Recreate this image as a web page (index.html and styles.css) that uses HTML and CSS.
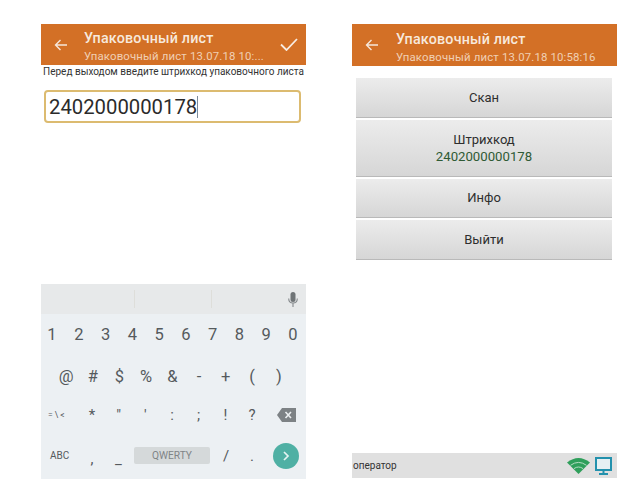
FILE: index.html
```html
<!DOCTYPE html>
<html lang="en">
<head>
  <meta charset="UTF-8" />
  <meta name="viewport" content="width=device-width, initial-scale=1.0" />
  <title>Упаковочный лист</title>
  <link rel="stylesheet" href="styles.css">
</head>
<body>

  <!-- Left screen: barcode entry -->
  <div class="phone">
    <header class="appbar">
      <svg class="back" width="13" height="12" viewBox="0 0 13 12"><path d="M13 6H1.500M6.500 1L1.500 6l5 5" fill="none" stroke="#f6e6da" stroke-width="1.400"/></svg>
      <div class="titles">
        <div class="title">Упаковочный лист</div>
        <div class="subtitle">Упаковочный лист 13.07.18 10:...</div>
      </div>
      <svg class="check" width="18" height="13" viewBox="0 0 18 13"><path d="M1 6.500l5.500 5.500L17 1" fill="none" stroke="#f8ece2" stroke-width="1.800"/></svg>
    </header>
    <p class="hint">Перед выходом введите штрихкод упаковочного листа</p>
    <div class="field"><span>2402000000178</span><i class="caret"></i></div>

    <div class="keyboard">
      <div class="suggest">
        <span class="sep"></span>
        <span class="sep"></span>
        <svg class="mic" width="10" height="15" viewBox="0 0 10 15">
          <rect x="2.500" y="0" width="5" height="10" rx="2.500" fill="#6f7477"/>
          <path d="M.7 6.500c0 3 1.800 4.500 4.300 4.500s4.300-1.500 4.300-4.500M5 11v4" fill="none" stroke="#85898c" stroke-width="1.100"/>
        </svg>
      </div>
      <div class="keys row-num">
        <span>1</span><span>2</span><span>3</span><span>4</span><span>5</span><span>6</span><span>7</span><span>8</span><span>9</span><span>0</span>
      </div>
      <div class="keys row-sym">
        <span>@</span><span>#</span><span>$</span><span>%</span><span>&amp;</span><span>-</span><span>+</span><span>(</span><span>)</span>
      </div>
      <div class="keys row-third">
        <span class="small">= \ &lt;</span><span>*</span><span>"</span><span>'</span><span>:</span><span>;</span><span>!</span><span>?</span>
        <svg class="del" width="19" height="14" viewBox="0 0 19 14">
          <path d="M5 0h14v14H5L0 7z" fill="#7d8285"/>
          <path d="M8.500 4l5.500 6M14 4l-5.500 6" stroke="#eceff1" stroke-width="1.600"/>
        </svg>
      </div>
      <div class="keys row-bottom">
        <span class="abc">ABC</span><span class="comma">,</span><span class="under">_</span>
        <span class="space">QWERTY</span>
        <span class="slash">/</span><span class="dot">.</span>
        <span class="go"><svg width="8" height="10" viewBox="0 0 8 10"><path d="M2 1l4 4-4 4" fill="none" stroke="#e6f4f2" stroke-width="1.700"/></svg></span>
      </div>
    </div>
  </div>

  <!-- Right screen: document menu -->
  <div class="phone">
    <header class="appbar appbar-tall">
      <svg class="back" width="13" height="12" viewBox="0 0 13 12"><path d="M13 6H1.500M6.500 1L1.500 6l5 5" fill="none" stroke="#f6e6da" stroke-width="1.400"/></svg>
      <div class="titles">
        <div class="title">Упаковочный лист</div>
        <div class="subtitle">Упаковочный лист 13.07.18 10:58:16</div>
      </div>
    </header>
    <div class="menu">
      <div class="btn">Скан</div>
      <div class="btn btn-tall">Штрихкод<span class="code">2402000000178</span></div>
      <div class="btn">Инфо</div>
      <div class="btn">Выйти</div>
    </div>
    <footer class="status">
      <span>оператор</span>
      <svg class="wifi" width="23" height="17" viewBox="0 0 23 17">
        <path d="M0 5.500Q11.500 -3.500 23 5.500L11.500 17z" fill="#2f9f5b"/>
        <path d="M3.500 8.300Q11.500 2.500 19.500 8.300M7 11.600Q11.500 8.400 16 11.600" fill="none" stroke="#b5dcc3" stroke-width="1"/>
      </svg>
      <svg class="monitor" width="17" height="18" viewBox="0 0 17 18">
        <rect x="1" y="1" width="15" height="12" fill="#e6f0f3" stroke="#2391ad" stroke-width="2"/>
        <path d="M8.500 13v3M4 17h9" stroke="#2391ad" stroke-width="2"/>
      </svg>
    </footer>
  </div>

</body>
</html>
```

FILE: styles.css
```css
body {
  margin: 0;
  padding: 24px 0 0 41px;
  display: flex;
  gap: 46px;
  font-family: Roboto, "Liberation Sans", sans-serif;
  background-color: #ffffff;
  color: #333;
}

.phone {
  width: 265px;
  height: 455px;
  display: flex;
  flex-direction: column;
}

/* Orange title bar */
.appbar {
  height: 41px;
  flex-shrink: 0;
  display: flex;
  align-items: center;
  background-color: #d37026;
  color: #f7e9dd;
}

.appbar-tall {
  height: 42px;
}

.back {
  margin-left: 13px;
  flex-shrink: 0;
}

.titles {
  margin-left: 17px;
  flex: 1;
  align-self: flex-start;
  padding-top: 6px;
  white-space: nowrap;
}

.appbar-tall .titles {
  margin-left: 18px;
  padding-top: 7px;
}

.title {
  font-size: 14.300px;
  font-weight: 500;
  line-height: 16px;
  letter-spacing: 0.2px;
}

.subtitle {
  font-size: 11.400px;
  line-height: 20px;
  color: #f0cfb4;
  letter-spacing: 0.15px;
}

.check {
  margin-right: 8px;
}

.hint {
  margin: 1px 0 0;
  font-size: 10px;
  line-height: 12px;
  text-align: center;
  white-space: nowrap;
  color: #333;
}

.field {
  margin: 12px 5px 0 3px;
  height: 33px;
  display: flex;
  align-items: center;
  padding-left: 3px;
  border: 2px solid #dcbb70;
  border-radius: 4px;
  font-size: 20.300px;
  color: #2b2b2b;
  box-sizing: border-box;
}

.caret {
  width: 1px;
  height: 22px;
  background-color: #7c8a9a;
}

/* Keyboard */
.keyboard {
  margin-top: auto;
  height: 195px;
  background-color: #ecf0f3;
  color: #555a5d;
  display: flex;
  flex-direction: column;
}

.suggest {
  height: 30px;
  display: flex;
  align-items: center;
  background-color: #e7e9ea;
  padding-left: 93px;
}

.sep {
  width: 1px;
  height: 18px;
  background-color: #dededa;
  margin-right: 76px;
}

.mic {
  margin-left: auto;
  margin-right: 8px;
}

.keys {
  display: flex;
  align-items: center;
}

.row-num {
  height: 40px;
  padding: 0 3px 0 1px;
  justify-content: space-between;
  font-size: 16.500px;
}

.row-num span {
  width: 20px;
  text-align: center;
}

.row-sym {
  height: 44px;
  padding: 0 14px 0 12px;
  justify-content: space-between;
  font-size: 16.500px;
}

.row-sym span {
  width: 26.500px;
  text-align: center;
}

.row-third {
  height: 34px;
  padding: 0 10px 0 7px;
  font-size: 15px;
}

.row-third span {
  width: 26.700px;
  text-align: center;
}

.row-third .small {
  width: 30.600px;
  font-size: 8.500px;
  text-align: left;
  white-space: nowrap;
}

.del {
  margin-left: auto;
}

.row-bottom {
  height: 47px;
  padding: 0 7px 0 9px;
  font-size: 15px;
}

.abc {
  width: 29px;
  font-size: 10px;
}

.comma,
.under {
  margin-top: 6px;
  text-align: center;
}

.comma {
  width: 26px;
}

.under {
  width: 27px;
}

.space {
  width: 76px;
  height: 17px;
  margin-left: 2px;
  margin-right: 3px;
  line-height: 17px;
  text-align: center;
  background-color: #d5d9da;
  border-radius: 2px;
  font-size: 10.200px;
  color: #7f8487;
}

.slash,
.dot {
  width: 26px;
  text-align: center;
}

.go {
  width: 26px;
  height: 26px;
  margin-left: auto;
  border-radius: 50%;
  background-color: #4fb0a4;
  display: flex;
  align-items: center;
  justify-content: center;
}

/* Right screen buttons */
.menu {
  margin-top: 12px;
  padding: 0 5px 0 4px;
  display: flex;
  flex-direction: column;
  gap: 2px;
}

.btn {
  height: 39.500px;
  display: flex;
  flex-direction: column;
  align-items: center;
  justify-content: center;
  background: linear-gradient(#ececec, #d6d6d6);
  border-bottom: 1px solid #b9b9b9;
  box-sizing: border-box;
  font-size: 13px;
  line-height: 17px;
  color: #2e2e2e;
}

.btn-tall {
  height: 57px;
}

.code {
  color: #2f5a35;
  font-size: 13.200px;
}

.status {
  margin-top: auto;
  margin-bottom: 1px;
  height: 25px;
  display: flex;
  align-items: center;
  padding-left: 1px;
  background-color: #e0e0e0;
  font-size: 10px;
  color: #333;
}

.status span {
  flex: 1;
}

.monitor {
  margin: 0 5px 0 5px;
}
```
